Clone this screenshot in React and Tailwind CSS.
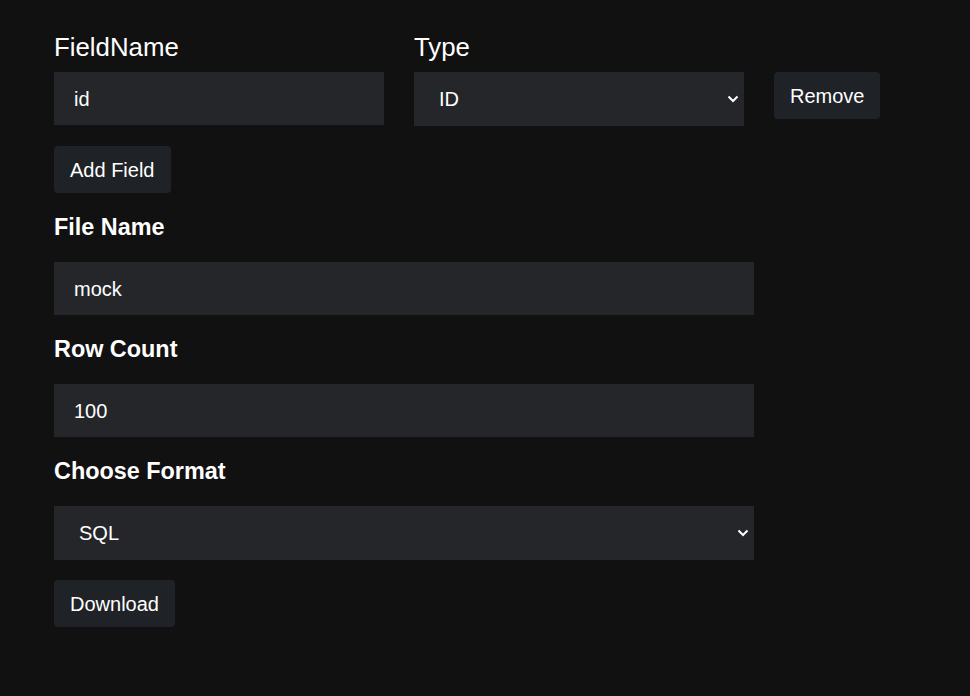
import React from "react";

function Chevron() {
  return (
    <svg width="12" height="8" viewBox="0 0 12 8" className="pointer-events-none absolute right-[5px] top-1/2 -translate-y-1/2">
      <path d="M1.5 1.5 L6 6 L10.5 1.5" stroke="white" strokeWidth="2" fill="none" />
    </svg>
  );
}

function Select({ value, widthClass }) {
  return (
    <div className={`relative ${widthClass}`}>
      <div className="h-[54px] bg-[#25262a] pl-[25px] flex items-center text-[20px] text-white">{value}</div>
      <Chevron />
    </div>
  );
}

function Button({ children }) {
  return (
    <button className="h-[47px] px-[16px] pt-[2px] rounded-[4px] bg-[#1f2227] text-white text-[20px] leading-[23px]">
      {children}
    </button>
  );
}

function Input({ value, widthClass }) {
  return (
    <div className={`h-[53px] bg-[#25262a] pl-[20px] flex items-center text-[20px] text-white ${widthClass}`}>
      {value}
    </div>
  );
}

export default function App() {
  return (
    <div
      className="min-h-[696px] w-full bg-[#111111] text-white pl-[54px] pt-[32px]"
      style={{ fontFamily: '"Liberation Sans", Arial, sans-serif' }}
    >
      <div className="flex gap-[30px] items-start">
        <div className="flex flex-col">
          <div className="text-[25.8px] leading-[29px] h-[40px] pt-[1px]">FieldName</div>
          <Input value="id" widthClass="w-[330px]" />
        </div>
        <div className="flex flex-col">
          <div className="text-[25.8px] leading-[29px] h-[40px] pt-[1px]">Type</div>
          <Select value="ID" widthClass="w-[330px]" />
        </div>
        <div className="pt-[40px]">
          <Button>Remove</Button>
        </div>
      </div>
      <div className="mt-[20px]">
        <Button>Add Field</Button>
      </div>
      <div className="mt-[21px] text-[23.4px] font-bold leading-[27px]">File Name</div>
      <div className="mt-[21px]">
        <Input value="mock" widthClass="w-[700px]" />
      </div>
      <div className="mt-[21px] text-[23.4px] font-bold leading-[27px]">Row Count</div>
      <div className="mt-[21px]">
        <Input value="100" widthClass="w-[700px]" />
      </div>
      <div className="mt-[21px] text-[23.4px] font-bold leading-[27px]">Choose Format</div>
      <div className="mt-[21px]">
        <Select value="SQL" widthClass="w-[700px]" />
      </div>
      <div className="mt-[20px]">
        <Button>Download</Button>
      </div>
    </div>
  );
}
